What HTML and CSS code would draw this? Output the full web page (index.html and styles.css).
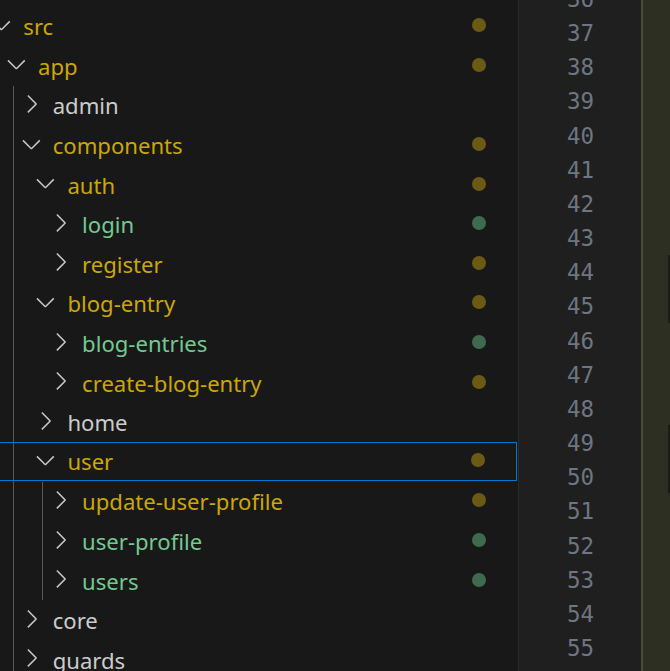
FILE: index.html
```html
<!DOCTYPE html>
<html>
<head>
<meta charset="utf-8">
<link rel="stylesheet" href="styles.css">
</head>
<body>
<div class="window">
  <aside class="explorer">
    <div class="tree">
      <div class="row l0 yel"><span class="tw"><svg viewBox="0 0 16 16"><path d="M7.976 10.072l4.357-4.357.62.618L8.284 11h-.618L3 6.333l.619-.618 4.357 4.357z"/></svg></span><span class="label">src</span><span class="dot dy"></span></div>
      <div class="row l1 yel"><span class="tw"><svg viewBox="0 0 16 16"><path d="M7.976 10.072l4.357-4.357.62.618L8.284 11h-.618L3 6.333l.619-.618 4.357 4.357z"/></svg></span><span class="label">app</span><span class="dot dy"></span></div>
      <div class="group guide-app">
        <div class="row l2 wht"><span class="tw"><svg viewBox="0 0 16 16"><path d="M10.072 8.024L5.715 3.667l.618-.62L11 7.716v.618L6.333 13l-.618-.619 4.357-4.357z"/></svg></span><span class="label">admin</span></div>
        <div class="row l2 yel"><span class="tw"><svg viewBox="0 0 16 16"><path d="M7.976 10.072l4.357-4.357.62.618L8.284 11h-.618L3 6.333l.619-.618 4.357 4.357z"/></svg></span><span class="label">components</span><span class="dot dy"></span></div>
        <div class="row l3 yel"><span class="tw"><svg viewBox="0 0 16 16"><path d="M7.976 10.072l4.357-4.357.62.618L8.284 11h-.618L3 6.333l.619-.618 4.357 4.357z"/></svg></span><span class="label">auth</span><span class="dot dy"></span></div>
        <div class="row l4 grn"><span class="tw"><svg viewBox="0 0 16 16"><path d="M10.072 8.024L5.715 3.667l.618-.62L11 7.716v.618L6.333 13l-.618-.619 4.357-4.357z"/></svg></span><span class="label">login</span><span class="dot dg"></span></div>
        <div class="row l4 yel"><span class="tw"><svg viewBox="0 0 16 16"><path d="M10.072 8.024L5.715 3.667l.618-.62L11 7.716v.618L6.333 13l-.618-.619 4.357-4.357z"/></svg></span><span class="label">register</span><span class="dot dy"></span></div>
        <div class="row l3 yel"><span class="tw"><svg viewBox="0 0 16 16"><path d="M7.976 10.072l4.357-4.357.62.618L8.284 11h-.618L3 6.333l.619-.618 4.357 4.357z"/></svg></span><span class="label">blog-entry</span><span class="dot dy"></span></div>
        <div class="row l4 grn"><span class="tw"><svg viewBox="0 0 16 16"><path d="M10.072 8.024L5.715 3.667l.618-.62L11 7.716v.618L6.333 13l-.618-.619 4.357-4.357z"/></svg></span><span class="label">blog-entries</span><span class="dot dg"></span></div>
        <div class="row l4 yel"><span class="tw"><svg viewBox="0 0 16 16"><path d="M10.072 8.024L5.715 3.667l.618-.62L11 7.716v.618L6.333 13l-.618-.619 4.357-4.357z"/></svg></span><span class="label">create-blog-entry</span><span class="dot dy"></span></div>
        <div class="row l3 wht"><span class="tw"><svg viewBox="0 0 16 16"><path d="M10.072 8.024L5.715 3.667l.618-.62L11 7.716v.618L6.333 13l-.618-.619 4.357-4.357z"/></svg></span><span class="label">home</span></div>
        <div class="row l3 yel selected"><span class="tw"><svg viewBox="0 0 16 16"><path d="M7.976 10.072l4.357-4.357.62.618L8.284 11h-.618L3 6.333l.619-.618 4.357 4.357z"/></svg></span><span class="label">user</span><span class="dot dy"></span></div>
        <div class="group guide-user">
          <div class="row l4 yel"><span class="tw"><svg viewBox="0 0 16 16"><path d="M10.072 8.024L5.715 3.667l.618-.62L11 7.716v.618L6.333 13l-.618-.619 4.357-4.357z"/></svg></span><span class="label">update-user-profile</span><span class="dot dy"></span></div>
          <div class="row l4 grn"><span class="tw"><svg viewBox="0 0 16 16"><path d="M10.072 8.024L5.715 3.667l.618-.62L11 7.716v.618L6.333 13l-.618-.619 4.357-4.357z"/></svg></span><span class="label">user-profile</span><span class="dot dg"></span></div>
          <div class="row l4 grn"><span class="tw"><svg viewBox="0 0 16 16"><path d="M10.072 8.024L5.715 3.667l.618-.62L11 7.716v.618L6.333 13l-.618-.619 4.357-4.357z"/></svg></span><span class="label">users</span><span class="dot dg"></span></div>
        </div>
        <div class="row l2 wht"><span class="tw"><svg viewBox="0 0 16 16"><path d="M10.072 8.024L5.715 3.667l.618-.62L11 7.716v.618L6.333 13l-.618-.619 4.357-4.357z"/></svg></span><span class="label">core</span></div>
        <div class="row l2 wht"><span class="tw"><svg viewBox="0 0 16 16"><path d="M10.072 8.024L5.715 3.667l.618-.62L11 7.716v.618L6.333 13l-.618-.619 4.357-4.357z"/></svg></span><span class="label">guards</span></div>
      </div>
    </div>
  </aside>
  <main class="editor">
    <div class="gutter">
      <div class="ln">36</div><div class="ln">37</div><div class="ln">38</div><div class="ln">39</div><div class="ln">40</div>
      <div class="ln">41</div><div class="ln">42</div><div class="ln">43</div><div class="ln">44</div><div class="ln">45</div>
      <div class="ln">46</div><div class="ln">47</div><div class="ln">48</div><div class="ln">49</div><div class="ln">50</div>
      <div class="ln">51</div><div class="ln">52</div><div class="ln">53</div><div class="ln">54</div><div class="ln">55</div>
      <div class="ln">56</div>
    </div>
  </main>
  <div class="minimap">
    <div class="slider s1"></div>
    <div class="slider s2"></div>
  </div>
</div>
</body>
</html>
```

FILE: styles.css
```css
* { box-sizing: border-box; }
html, body {
  margin: 0;
  padding: 0;
  width: 670px;
  height: 671px;
  overflow: hidden;
  background: #1f1f1f;
}
.window {
  display: flex;
  width: 670px;
  height: 671px;
  overflow: hidden;
}
.explorer {
  width: 519px;
  flex: none;
  height: 671px;
  background: #181818;
  border-right: 1px solid #2b2b2b;
  overflow: hidden;
}
.tree {
  width: 517px;
  padding-top: 6.4px;
  font-family: "Noto Sans", "Open Sans", sans-serif;
  font-size: 22.1px;
}
.row {
  display: flex;
  align-items: center;
  height: 39.6px;
  white-space: nowrap;
}
.l0 { padding-left: 0; }
.l1 { padding-left: 14.7px; }
.l2 { padding-left: 29.4px; }
.l3 { padding-left: 44.1px; }
.l4 { padding-left: 58.8px; }
.tw {
  flex: none;
  width: 28.8px;
  height: 28.8px;
  margin-left: -12.7px;
  transform: translateY(-1.5px);
  display: flex;
}
.tw svg {
  width: 28.8px;
  height: 28.8px;
  fill: #c5c5c5;
}
.label {
  flex: 1;
  margin-left: 7.2px;
}
.yel .label { color: #cca700; }
.grn .label { color: #73c991; }
.wht .label { color: #cccccc; }
.dot {
  flex: none;
  width: 14px;
  height: 14px;
  border-radius: 50%;
  margin-right: 31px;
  transform: translateY(-1px);
}
.dy { background: #6b5a14; }
.dg { background: #3f6a4f; }
.selected {
  height: 39px;
  margin-bottom: 0.6px;
  border-top: 1px solid #0078d4;
  border-bottom: 1px solid #0078d4;
  border-right: 1px solid #0078d4;
}
.group {
  background-repeat: no-repeat;
  background-image: linear-gradient(#585858, #585858);
  background-size: 1px 100%;
}
.guide-app { background-position: 13px 0; }
.guide-user { background-position: 42px 0; }
.editor {
  flex: 1;
  height: 671px;
  background: #1f1f1f;
  overflow: hidden;
}
.gutter {
  margin-top: -18px;
  width: 75px;
  font-family: "DejaVu Sans Mono", "Liberation Mono", monospace;
  font-size: 22.5px;
  color: #6e7681;
  text-align: right;
}
.ln {
  height: 34.17px;
  line-height: 34.17px;
}
.minimap {
  position: relative;
  flex: none;
  width: 29px;
  height: 671px;
  background: #2e2f23;
  border-left: 2px solid #4a4a41;
}
.slider {
  position: absolute;
  right: 0;
  width: 2px;
  background: #1c1c1a;
}
.s1 { top: 255px; height: 68px; }
.s2 { top: 425px; height: 68px; }
```
